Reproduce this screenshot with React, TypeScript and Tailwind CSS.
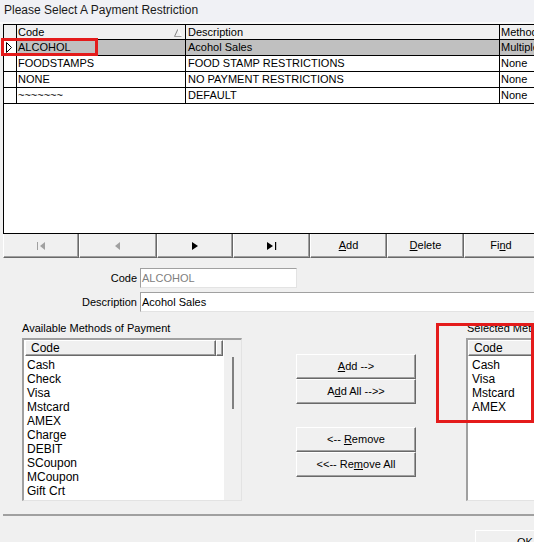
import React from "react";

function Raised({ className = "", children }: { className?: string; children?: React.ReactNode }) {
  return (
    <div
      className={
        "border-t border-l border-t-white border-l-white border-r border-b border-r-[#696969] border-b-[#696969] shadow-[inset_-1px_-1px_0_#a0a0a0] bg-[#f0f0f0] " +
        className
      }
    >
      {children}
    </div>
  );
}

function NavBtn({ w, children }: { w: string; children?: React.ReactNode }) {
  return (
    <div
      className={
        "h-[24px] shrink-0 flex items-center justify-center border-l border-l-white border-r border-b border-r-[#696969] border-b-[#696969] shadow-[inset_-1px_-1px_0_#a0a0a0] text-[11px] " +
        w
      }
    >
      {children}
    </div>
  );
}

const rows = [
  { code: "ALCOHOL", desc: "Acohol Sales", method: "Multiple", sel: true },
  { code: "FOODSTAMPS", desc: "FOOD STAMP RESTRICTIONS", method: "None" },
  { code: "NONE", desc: "NO PAYMENT RESTRICTIONS", method: "None" },
  { code: "~~~~~~~", desc: "DEFAULT", method: "None" },
];

const avail = ["Cash", "Check", "Visa", "Mstcard", "AMEX", "Charge", "DEBIT", "SCoupon", "MCoupon", "Gift Crt"];
const selected = ["Cash", "Visa", "Mstcard", "AMEX"];

export default function App() {
  return (
    <div className="relative w-[534px] h-[542px] overflow-hidden bg-[#f0f0f0] text-black font-['Liberation_Sans',Arial,sans-serif]">
      <div className="h-[22px] bg-[#f0f1f5] pl-[4px] pt-[2px] text-[12px] leading-[16px] text-[#1a1a1a] whitespace-nowrap">
        Please Select A Payment Restriction
      </div>
      <div className="h-[2px] bg-[#fafafa]" />

      {/* Grid */}
      <div className="ml-[3px] w-[560px] h-[210px] border border-black bg-white">
        <div className="flex h-[15px] border-b border-black bg-[#f0f0f0] text-[11px] leading-[14px]">
          <div className="w-[13px] shrink-0 border-r border-black" />
          <div className="w-[169px] shrink-0 border-r border-black pl-[1px] flex items-center justify-between pr-[3px]">
            <span>Code</span>
            <svg width="8" height="9" viewBox="0 0 8 9">
              <path d="M0.5 8.5 L4 1" stroke="#808080" fill="none" />
              <path d="M4 1 L7.5 8.5" stroke="#ffffff" fill="none" />
              <path d="M0.5 8.5 L7.5 8.5" stroke="#a0a0a0" fill="none" />
            </svg>
          </div>
          <div className="w-[314px] shrink-0 border-r border-black pl-[2px]">Description</div>
          <div className="flex-1 pl-[1px] whitespace-nowrap">Method</div>
        </div>
        {rows.map((r) => (
          <div key={r.code} className="flex h-[16px] border-b border-black text-[11px] leading-[15px] whitespace-nowrap">
            <div className="w-[13px] shrink-0 border-r border-black bg-white flex items-center pl-[2px]">
              {r.sel && (
                <svg width="7" height="11" viewBox="0 0 7 11">
                  <path d="M0.5 0.5 L0.5 10.5 L5.5 5.5 Z" stroke="#000" fill="none" />
                </svg>
              )}
            </div>
            <div className={"w-[169px] shrink-0 border-r border-black pl-[1px] " + (r.sel ? "bg-[#c0c0c0]" : "")}>{r.code}</div>
            <div className={"w-[314px] shrink-0 border-r border-black pl-[2px] " + (r.sel ? "bg-[#c0c0c0]" : "")}>{r.desc}</div>
            <div className={"flex-1 pl-[1px] " + (r.sel ? "bg-[#c0c0c0]" : "")}>{r.method}</div>
          </div>
        ))}
      </div>

      {/* Navigator */}
      <div className="ml-[3px] flex w-[560px]">
        <NavBtn w="w-[76px]">
          <svg width="9" height="8" viewBox="0 0 9 8">
            <rect x="0" y="0" width="1" height="8" fill="#a0a0a0" />
            <path d="M8 0 L3 4 L8 8 Z" fill="#a0a0a0" />
          </svg>
        </NavBtn>
        <NavBtn w="w-[78px]">
          <svg width="6" height="8" viewBox="0 0 6 8">
            <path d="M5 0 L0 4 L5 8 Z" fill="#a0a0a0" />
          </svg>
        </NavBtn>
        <NavBtn w="w-[76px]">
          <svg width="7" height="8" viewBox="0 0 7 8">
            <path d="M0 0 L6 4 L0 8 Z" fill="#000" />
          </svg>
        </NavBtn>
        <NavBtn w="w-[77px]">
          <svg width="10" height="8" viewBox="0 0 10 8">
            <path d="M0 0 L6 4 L0 8 Z" fill="#000" />
            <rect x="8" y="0" width="1.2" height="8" fill="#000" />
          </svg>
        </NavBtn>
        <NavBtn w="w-[77px]">
          <span><span className="underline">A</span>dd</span>
        </NavBtn>
        <NavBtn w="w-[77px]">
          <span><span className="underline">D</span>elete</span>
        </NavBtn>
        <NavBtn w="w-[80px]">
          <span className="pr-[6px]">Fi<span className="underline">n</span>d</span>
        </NavBtn>
      </div>

      {/* Form fields */}
      <div className="mt-[10px] flex items-center text-[11px]">
        <div className="w-[137px] shrink-0 text-right">Code</div>
        <div className="ml-[3px] w-[157px] shrink-0 h-[20px] bg-white border-t border-l border-[#a0a0a0] border-r border-b border-r-[#e3e3e3] border-b-[#e3e3e3] pl-[1px] leading-[18px] text-[#808080]">
          ALCOHOL
        </div>
      </div>
      <div className="mt-[4px] flex items-center text-[11px]">
        <div className="w-[137px] shrink-0 text-right">Description</div>
        <div className="ml-[3px] w-[420px] shrink-0 h-[20px] bg-white border-t border-l border-[#a0a0a0] border-r border-b border-r-[#e3e3e3] border-b-[#e3e3e3] pl-[1px] leading-[18px]">
          Acohol Sales
        </div>
      </div>

      {/* Lists */}
      <div className="mt-[9px] flex">
        <div className="ml-[22px] w-[220px] shrink-0">
          <div className="h-[17px] text-[11px] leading-[14px] whitespace-nowrap">Available Methods of Payment</div>
          <div className="h-[163px] flex border-t-2 border-l-2 border-t-[#a0a0a0] border-l-[#a0a0a0] border-r border-b border-r-[#e3e3e3] border-b-[#e3e3e3] bg-white">
            <div className="flex-1 flex flex-col">
              <div className="flex h-[16px] text-[12px] leading-[14px]">
                <Raised className="w-[191px] pl-[5px] ml-[1px]">Code</Raised>
                <Raised className="w-[7px]" />
              </div>
              <div className="pl-[3px] pt-[2px] text-[12px] leading-[14px]">
                {avail.map((a) => (
                  <div key={a}>{a}</div>
                ))}
              </div>
            </div>
            <div className="w-[17px] bg-[#f0f0f0] flex flex-col">
              <div className="mt-[17px] ml-[8px] w-[2px] h-[52px] bg-[#808080]" />
            </div>
          </div>
        </div>

        <div className="ml-[54px] w-[120px] shrink-0 pt-[33px] text-[11px]">
          <Raised className="h-[25px] flex items-center justify-center">
            <span><span className="underline">A</span>dd --&gt;</span>
          </Raised>
          <Raised className="h-[25px] flex items-center justify-center">
            <span>A<span className="underline">d</span>d All --&gt;&gt;</span>
          </Raised>
          <Raised className="mt-[23px] h-[25px] flex items-center justify-center">
            <span>&lt;-- <span className="underline">R</span>emove</span>
          </Raised>
          <Raised className="h-[25px] flex items-center justify-center">
            <span>&lt;&lt;-- Re<span className="underline">m</span>ove All</span>
          </Raised>
        </div>

        <div className="ml-[50px] w-[100px] shrink-0">
          <div className="h-[17px] text-[11px] leading-[14px] whitespace-nowrap pl-[1px]">Selected Methods of Payment</div>
          <div className="h-[163px] flex flex-col border-t-2 border-l-2 border-t-[#a0a0a0] border-l-[#a0a0a0] border-b border-b-[#e3e3e3] bg-white">
            <div className="flex h-[16px] text-[12px] leading-[14px]">
              <Raised className="w-[100px] pl-[5px]">Code</Raised>
            </div>
            <div className="pl-[4px] pt-[2px] text-[12px] leading-[14px]">
              {selected.map((a) => (
                <div key={a}>{a}</div>
              ))}
            </div>
          </div>
        </div>
      </div>

      <div className="mt-[13px] ml-[3px] h-[2px] bg-[#a0a0a0]" />

      <Raised className="mt-[14px] ml-[475px] w-[80px] h-[24px] pl-[41px] text-[11px] leading-[22px]">OK</Raised>

      {/* Red annotation boxes */}
      <div className="absolute left-[1px] top-[38px] w-[97px] h-[18px] border-[3px] border-[#e41b1b]" />
      <div className="absolute left-[436px] top-[323px] w-[98px] h-[100px] border-[3px] border-[#e41b1b]" />
    </div>
  );
}
